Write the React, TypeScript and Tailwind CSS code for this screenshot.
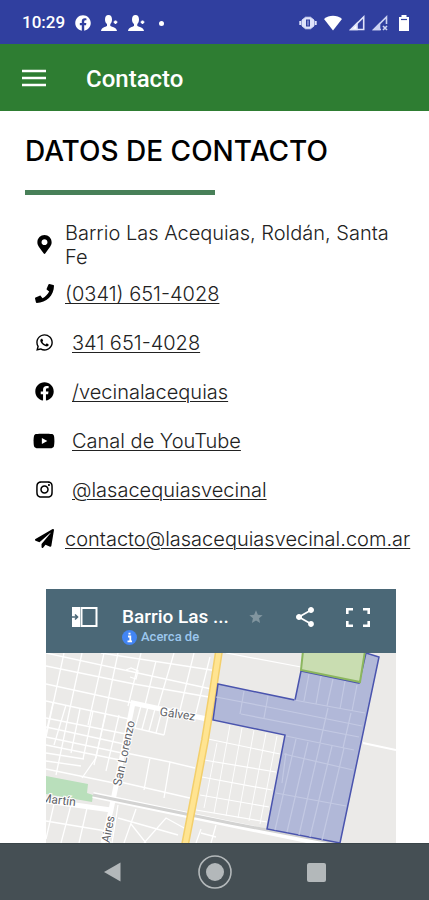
import React from 'react';
import {
    FaFacebook,
    FaInstagram,
    FaMapMarkerAlt,
    FaPaperPlane,
    FaPhone,
    FaWhatsapp,
    FaYoutube,
} from 'react-icons/fa';
import { MdShare, MdStar } from 'react-icons/md';
import type { IconType } from 'react-icons';

interface ContactItem {
    icon: IconType;
    text: string;
    href?: string;
    indent?: boolean;
}

const contacts: ContactItem[] = [
    { icon: FaMapMarkerAlt, text: 'Barrio Las Acequias, Roldán, Santa Fe' },
    { icon: FaPhone, text: '(0341) 651-4028', href: 'tel:03416514028' },
    { icon: FaWhatsapp, text: '341 651-4028', href: '#whatsapp', indent: true },
    { icon: FaFacebook, text: '/vecinalacequias', href: '#facebook', indent: true },
    { icon: FaYoutube, text: 'Canal de YouTube', href: '#youtube', indent: true },
    { icon: FaInstagram, text: '@lasacequiasvecinal', href: '#instagram', indent: true },
    {
        icon: FaPaperPlane,
        text: 'contacto@lasacequiasvecinal.com.ar',
        href: 'mailto:contacto@lasacequiasvecinal.com.ar',
    },
];

const PersonIcon = () => (
    <svg className="w-[17px] h-4" viewBox="0 0 17 16" fill="currentColor">
        <path d="M7.500 0C10 0 11 2 11 4.500C11 6.500 10.300 8 9.300 9V11C11 12 15.500 12 16 16H0C0.500 12 4.500 12 6 11V9C4.800 8 4 6.500 4 4.500C4 2 5 0 7.500 0Z" />
        <path d="M14.500 5.500V9M12.700 7.200H16.300" stroke="currentColor" strokeWidth="1.800" />
    </svg>
);

const StatusBar = () => (
    <div className="h-11 pt-0.5 pl-[22px] pr-5 flex items-center justify-between bg-[#303f9f] text-white">
        <div className="flex items-center gap-2.5">
            <span className="text-[17px] font-medium">10:29</span>
            <FaFacebook className="size-4" />
            <PersonIcon />
            <PersonIcon />
            <span className="ml-1 size-[5px] rounded-full bg-white" />
        </div>
        <div className="flex items-center gap-[7px]">
            {/* vibrate */}
            <svg className="w-[18px] h-4" viewBox="0 0 18 16" fill="none" stroke="#dfe3fa">
                <path d="M6.500 2.200H11.500L15 5V11L11.500 13.800H6.500L3 11V5Z" fill="#dfe3fa" strokeWidth="0.800" />
                <path d="M7 4.500H11V11.500H7Z" fill="#303f9f" stroke="none" />
                <path d="M9 5.500V10.500" stroke="#8f99d6" strokeWidth="1.500" />
                <path d="M1.300 6V10M16.700 6V10" strokeWidth="2" />
            </svg>
            {/* wifi */}
            <svg className="w-[18px] h-4" viewBox="0 0 18 16" fill="currentColor">
                <path d="M0 4C5 -0.300 13 -0.300 18 4L9 15.500Z" />
            </svg>
            {/* signal, sim 1 */}
            <svg className="size-4" viewBox="0 0 16 16" fill="none" stroke="#dfe3fa" strokeWidth="1.600">
                <path d="M2 14.500L14.700 2V14.500Z" />
                <path d="M2 14.500L8 8.500V14.500Z" fill="#fff" />
            </svg>
            {/* signal, sim 2 */}
            <svg className="size-4" viewBox="0 0 16 16" fill="none" stroke="#cdd3f2" strokeWidth="1.600">
                <path d="M14.500 9V2L2 14.500H9" />
                <path d="M2 14.500L7.500 9V14.500Z" fill="#cdd3f2" />
                <path d="M11 11L15 15M15 11L11 15" />
            </svg>
            {/* battery */}
            <svg className="w-2.5 h-4 ml-1" viewBox="0 0 10 16" fill="currentColor">
                <path d="M2.500 0H7.500V2H10V16H0V2H2.500Z" />
                <path d="M2 4.500H8" stroke="#303f9f" strokeWidth="1.200" />
            </svg>
        </div>
    </div>
);

const ContactRow = ({ item }: { item: ContactItem }) => {
    const Icon = item.icon;
    return (
        <li className="min-h-[49px] flex items-center">
            <span className="w-[38px] mr-0.5 shrink-0 flex justify-center">
                <Icon className={item.icon === FaYoutube ? 'size-[22px] text-black' : 'size-[19px] text-black'} />
            </span>
            {item.href ? (
                <a
                    href={item.href}
                    className={`underline underline-offset-2 decoration-1 whitespace-nowrap ${item.indent ? 'ml-[7px]' : ''}`}
                >
                    {item.text}
                </a>
            ) : (
                <span>{item.text}</span>
            )}
        </li>
    );
};

const MapDrawing = () => (
    <svg
        className="block w-full h-full"
        viewBox="0 0 350 190"
        preserveAspectRatio="xMidYMid slice"
        fontFamily="Roboto, sans-serif"
    >
        <rect width="350" height="190" fill="#ebeae8" />

        {/* streets, west side */}
        <g fill="none" stroke="#fff" strokeWidth="1.300">
            <path d="M0 0L170 37M0 13L88 31L163 44M55 0L172 18M0 31L87 50M0 48L83 66M0 65L80 81M0 74L78 91M0 84L76 100M0 92L74 107M0 100L38 106M0 108L35 113" />
            <path d="M18 0L0 84M36 0L24 55L10 122M58 0L42 72M72 0L50 105L36 125M95 0L82 53M110 8L99 52M128 0L112 54M148 0L134 57M164 4L150 60" />
            <path d="M7 50L0 80M20 52L8 92M34 56L25 100M47 58L37 106M60 60L48 112M73 62L60 118" />
            <path d="M95 53L89 75M102 54L96 76M109 56L103 78M116 57L110 80M123 59L118 82M89 75L118 82" />
            <path d="M0 116L68 130M124 109L149 115M124 109L118 145M80 100L124 109M70 128L148 146M104 105L98 137" />
            <path d="M8 151L0 186M25 152L15 190M41 155L33 190M0 168L60 178M72 152L66 190M72 165L132 182M90 156L78 190M98 190L120 165L140 176M85 171L100 190M155 176L150 190M155 180L170 184M170 172L165 190" />
            <path d="M80 17L85 15L92 18L90 26L84 24" />
        </g>

        {/* streets, centre and east */}
        <g fill="none" stroke="#fff" strokeWidth="1.200">
            <path d="M180 0L255 14M162 86L234 101M158 107L230 119M156 124L226 137M154 142L223 154M150 157L221 169" />
            <path d="M184 72L168 160M196 75L180 163M208 77L192 165M220 80L203 168M231 83L214 171M171 90L158 155" strokeWidth="0.900" />
            <path d="M317 90L350 97" strokeWidth="2" />
        </g>

        {/* park */}
        <path d="M0 123L42 131L41 140L47 142L46 149L0 141Z" fill="#b9dfbb" />

        {/* wide streets */}
        <g fill="none" stroke="#fff" strokeWidth="5">
            <path d="M161 66L87 50L65 157L57 190" />
            <path d="M0 148L65 157" />
        </g>

        {/* railway */}
        <path d="M47 142L184 171L290 193" fill="none" stroke="#fff" strokeWidth="6" />
        <path d="M47 142L184 170L290 190" fill="none" stroke="#d3d3d2" strokeWidth="3" />

        {/* main road */}
        <path d="M173 -2L166 44L159 87L149 140L139 192" fill="none" stroke="#f3cf6b" strokeWidth="8" />
        <path d="M173 -2L166 44L159 87L149 140L139 192" fill="none" stroke="#ffe491" strokeWidth="5" />

        {/* neighbourhood */}
        <path
            d="M172 31L249 47L255 18L313 30L320 0L333 4L294 190L221 176L239 82L167 67Z"
            fill="#b1b8d8"
            stroke="#4a54ae"
            strokeWidth="1.500"
        />
        <g fill="none" stroke="#c3c9e3" strokeWidth="1.200">
            <path d="M170 44L222 54L316 73M195 61L313 84M248 47L319 60M240 83L308 97M238 101L307 117M230 140L300 153" />
            <path d="M198 38L194 61M222 43L218 65M263 21L258 48M275 23L270 51M287 26L281 53M299 28L294 56M311 32L306 58M282 55L274 90M305 60L297 95" />
            <path d="M250 86L229 177M262 89L241 179M274 91L253 182M286 93L264 184M298 95L276 187M240 100L236 130" />
        </g>
        <path d="M257 -2L255 17L314 29L319 -2Z" fill="#c9ddb1" stroke="#8bb65e" strokeWidth="2" />

        {/* labels */}
        <g fill="#5f6368" fontSize="12" textAnchor="middle" stroke="#fff" strokeWidth="2" paintOrder="stroke">
            <text transform="translate(131 65) rotate(8)">Gálvez</text>
            <text transform="translate(82 101) rotate(-78)">San Lorenzo</text>
            <text transform="translate(12 151) rotate(7)">Martín</text>
            <text transform="translate(66 177) rotate(-79)">Aires</text>
        </g>
    </svg>
);

const MapCard = () => (
    <section className="ml-[21px] mr-2 mt-[26px] flex-1 flex flex-col font-[Roboto,sans-serif]">
        <div className="h-16 px-[26px] flex bg-[#4b6877] text-white">
            <button aria-label="Abrir panel" className="mt-4 h-6">
                <svg className="w-[26px] h-[22px]" viewBox="0 0 26 22" fill="none">
                    <path d="M0 1H8V21H0Z" fill="#fff" />
                    <path d="M9.500 2H24.500V20H9.500Z" stroke="#fff" strokeWidth="2" />
                    <path d="M0 11H5M3 8.500L5.500 11L3 13.500" stroke="#4b6877" strokeWidth="1.600" />
                </svg>
            </button>
            <div className="ml-6 mt-4 flex-1 min-w-0">
                <h2 className="text-[19px] leading-6 font-medium whitespace-nowrap">Barrio Las ...</h2>
                <a href="#acerca" className="flex items-center gap-1 text-[13px] leading-4 font-medium text-[#9cc7ee]">
                    <svg className="size-[15px]" viewBox="0 0 15 15">
                        <circle cx="7.500" cy="7.500" r="7.500" fill="#4285f4" />
                        <path d="M6 6.500H8.300V11M5.500 11.300H10M6.500 3.700H8.500" stroke="#fff" strokeWidth="1.800" fill="none" />
                    </svg>
                    Acerca de
                </a>
            </div>
            <div className="mt-4 flex items-start gap-[25px]">
                <button aria-label="Destacar" className="h-6">
                    <MdStar className="size-4 text-[#81959f]" />
                </button>
                <button aria-label="Compartir" className="h-6 ml-1">
                    <MdShare className="size-6" />
                </button>
                <button aria-label="Pantalla completa" className="h-6 pl-1">
                    <svg className="w-6 h-[19px]" viewBox="0 0 24 19" fill="none" stroke="#fff" strokeWidth="2.600">
                        <path d="M1.300 6V1.300H7M17 1.300H22.700V6M22.700 13V17.700H17M7 17.700H1.300V13" />
                    </svg>
                </button>
            </div>
        </div>
        <div className="relative flex-1 min-h-[190px]">
            <div className="absolute inset-0">
                <MapDrawing />
            </div>
        </div>
    </section>
);

const NavigationBar = () => (
    <nav className="h-[57px] px-[103px] flex items-center justify-between bg-[#454f54] border-t border-[#3a4549] text-[#b3b8ba]">
        <button aria-label="Atrás">
            <svg className="w-5 h-5" viewBox="0 0 20 20" fill="currentColor">
                <path d="M1 10L17.500 0.500V19.500Z" />
            </svg>
        </button>
        <button aria-label="Inicio">
            <svg className="size-[34px]" viewBox="0 0 34 34">
                <circle cx="17" cy="17" r="16" fill="none" stroke="currentColor" strokeWidth="1.600" />
                <circle cx="17" cy="17" r="9" fill="currentColor" />
            </svg>
        </button>
        <button aria-label="Recientes" className="size-[19px] rounded-xs bg-[#b3b8ba]" />
    </nav>
);

export default function App() {
    return (
        <div className="min-h-dvh flex flex-col bg-white font-[Roboto,sans-serif]">
            <StatusBar />
            <header className="h-[67px] pt-0.5 px-[22px] flex items-center gap-10 bg-[#2e7d32] text-white">
                <button aria-label="Menú">
                    <svg className="w-6 h-6" viewBox="0 0 24 24" stroke="currentColor" strokeWidth="2.400">
                        <path d="M0 4H24M0 11H24M0 18H24" />
                    </svg>
                </button>
                <h1 className="text-2xl font-medium">Contacto</h1>
            </header>
            <main className="flex-1 flex flex-col px-[25px] pt-5 font-[Inter,sans-serif]">
                <h2 className="text-[28px] leading-10 font-medium text-black whitespace-nowrap">DATOS DE CONTACTO</h2>
                <div className="mt-[19px] w-1/2 h-[5px] bg-[#488058]" />
                <ul className="mt-[25px] text-[20px] leading-6 font-light text-[#222]">
                    {contacts.map((item) => (
                        <ContactRow key={item.text} item={item} />
                    ))}
                </ul>
                <MapCard />
            </main>
            <NavigationBar />
        </div>
    );
}
